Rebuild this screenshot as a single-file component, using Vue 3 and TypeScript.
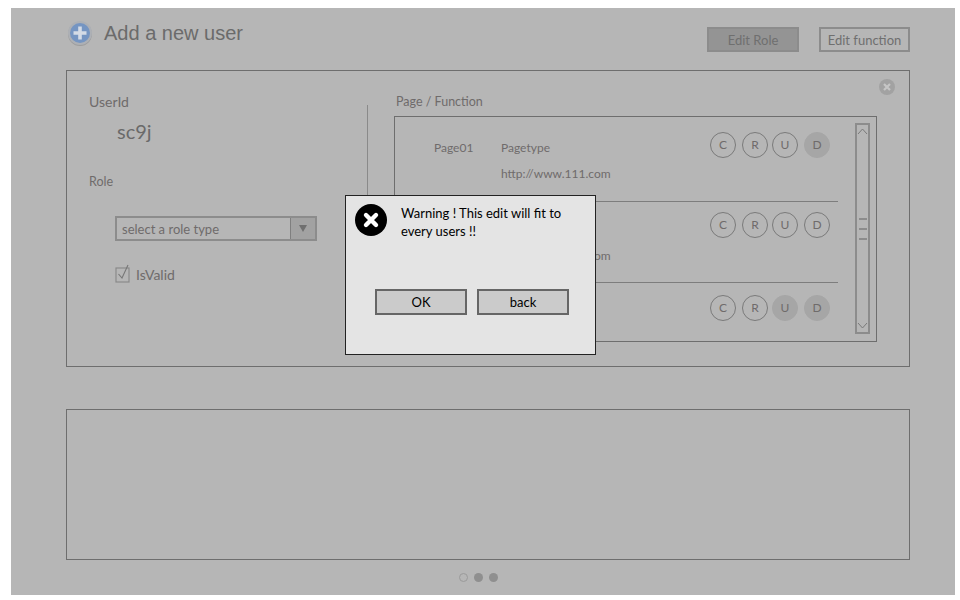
<script setup lang="ts">
type Row = {
  page: string;
  type: string;
  url: string;
  filled: string[];
};

// the modal covers the rest of rows 2 and 3
const rows: Row[] = [
  { page: "Page01", type: "Pagetype", url: "http://www.111.com", filled: ["D"] },
  { page: "", type: "", url: "http://www.111.com", filled: [] },
  { page: "", type: "", url: "", filled: ["U", "D"] },
];

const actions = ["C", "R", "U", "D"];
</script>

<template>
  <div class="frame">
    <header class="top">
      <svg class="add-icon" width="26" height="26" viewBox="0 0 26 26">
        <circle cx="13" cy="14" r="12" fill="#9c9c9c" />
        <circle cx="13" cy="13" r="12" fill="#adb0b5" />
        <circle cx="13" cy="13" r="10" fill="#7595c2" />
        <path d="M13 6.5v13M6.5 13h13" stroke="#d4dbe6" stroke-width="3.6" />
      </svg>
      <h1 class="title">Add a new user</h1>
      <div class="top-actions">
        <button class="tab tab-active">Edit Role</button>
        <button class="tab">Edit function</button>
      </div>
    </header>

    <section class="panel">
      <div class="left">
        <div class="label user-label">UserId</div>
        <div class="user-id">sc9j</div>
        <div class="label role-label">Role</div>
        <div class="select">
          <span class="select-text">select a role type</span>
          <span class="select-arrow"></span>
        </div>
        <label class="valid">
          <svg width="17" height="19" viewBox="0 0 17 19">
            <rect x="1" y="4" width="13" height="14" fill="none" stroke="#8a8a8a" stroke-width="1.2" />
            <path d="M3.5 10l3.5 4 6-13" fill="none" stroke="#777" stroke-width="1.1" />
          </svg>
          <span>IsValid</span>
        </label>
      </div>

      <div class="divider"></div>

      <div class="right">
        <div class="label func-label">Page / Function</div>
        <div class="list">
          <div class="rows">
            <div v-for="(row, i) in rows" :key="i" class="row">
              <div class="page">{{ row.page }}</div>
              <div class="info">
                <div class="type">{{ row.type }}</div>
                <div class="url">{{ row.url }}</div>
              </div>
              <div class="crud">
                <span
                  v-for="a in actions"
                  :key="a"
                  class="circle"
                  :class="{ filled: row.filled.includes(a) }"
                >{{ a }}</span>
              </div>
            </div>
          </div>
          <div class="scrollbar">
            <svg width="11" height="12" viewBox="0 0 11 12">
              <path d="M1 9l4.5-5L10 9" fill="none" stroke="#7a7a7a" />
            </svg>
            <div class="grip"><i></i><i></i><i></i></div>
            <svg width="11" height="12" viewBox="0 0 11 12">
              <path d="M1 3l4.5 5L10 3" fill="none" stroke="#7a7a7a" />
            </svg>
          </div>
        </div>
      </div>

      <svg class="panel-close" width="16" height="16" viewBox="0 0 16 16">
        <circle cx="8" cy="8" r="8" fill="#a2a2a2" />
        <path d="M5 5l6 6M11 5l-6 6" stroke="#c6c6c6" stroke-width="2.2" />
      </svg>
    </section>

    <section class="panel-empty"></section>

    <div class="dots">
      <span class="dot dot-open"></span>
      <span class="dot"></span>
      <span class="dot"></span>
    </div>

    <div class="modal">
      <div class="modal-body">
        <svg class="modal-icon" width="32" height="32" viewBox="0 0 32 32">
          <circle cx="16" cy="16" r="16" fill="#000" />
          <path d="M11 11l10 10M21 11L11 21" stroke="#fff" stroke-width="4.4" stroke-linecap="round" />
        </svg>
        <p class="modal-text">Warning ! This edit will fit to every users !!</p>
      </div>
      <div class="modal-actions">
        <button class="modal-btn">OK</button>
        <button class="modal-btn">back</button>
      </div>
    </div>
  </div>
</template>

<style scoped>
.frame {
  position: relative;
  box-sizing: border-box;
  width: 944px;
  height: 587px;
  margin: 8px 0 0 11px;
  background: #b6b6b6;
  color: #6f6b6b;
  font: 13px/16px Lato, sans-serif;
}

.top {
  display: flex;
  align-items: flex-start;
  height: 62px;
  padding: 12px 45px 0 56px;
  box-sizing: border-box;
}

.add-icon {
  flex: none;
}

.title {
  margin: 0 0 0 11px;
  font: 400 20px/26px "Liberation Sans", sans-serif;
  color: #6b6b6b;
}

.top-actions {
  display: flex;
  gap: 20px;
  margin: 7px 0 0 auto;
}

.tab {
  box-sizing: border-box;
  width: 91px;
  height: 25px;
  padding: 0;
  border: 2px solid #8c8c8c;
  background: transparent;
  color: #6f6f6f;
  font: 13px Lato, sans-serif;
}

.tab-active {
  width: 92px;
  background: #949494;
}

.panel {
  position: relative;
  display: flex;
  align-items: flex-start;
  box-sizing: border-box;
  width: 844px;
  height: 297px;
  margin-left: 55px;
  border: 1px solid #6e6e6e;
}

.left {
  box-sizing: border-box;
  width: 300px;
  padding: 23px 0 0 22px;
}

.user-label {
  font-size: 14px;
}

.user-id {
  margin: 10px 0 0 28px;
  font-size: 20px;
  line-height: 22px;
  color: #6a6a6a;
}

.role-label {
  margin-top: 32px;
  font-size: 12.5px;
}

.select {
  display: flex;
  box-sizing: border-box;
  width: 202px;
  height: 25px;
  margin: 26px 0 0 26px;
  border: 2px solid #8c8c8c;
}

.select-text {
  flex: 1;
  padding-left: 5px;
  line-height: 23px;
}

.select-arrow {
  position: relative;
  width: 24px;
  border-left: 1px solid #7f7f7f;
  background: #a2a2a2;
}

.select-arrow::after {
  content: "";
  position: absolute;
  left: 8px;
  top: 7px;
  border-style: solid;
  border-width: 7px 4px 0;
  border-color: #6f6f6f transparent transparent;
}

.valid {
  display: flex;
  align-items: flex-end;
  gap: 4px;
  height: 19px;
  margin: 23px 0 0 26px;
  font-size: 14px;
}

.divider {
  width: 1px;
  height: 250px;
  margin-top: 34px;
  background: #8a8a8a;
}

.right {
  margin-left: 26px;
  padding-top: 23px;
}

.func-label {
  margin-left: 2px;
  font-size: 12.5px;
}

.list {
  display: flex;
  box-sizing: border-box;
  width: 483px;
  height: 226px;
  margin-top: 6px;
  border: 1px solid #6e6e6e;
}

.rows {
  width: 443px;
}

.row {
  display: flex;
  box-sizing: border-box;
  padding-left: 39px;
  border-bottom: 1px solid #7d7d7d;
}

.row:nth-child(1) {
  height: 85px;
  padding-top: 23px;
}

.row:nth-child(2) {
  height: 81px;
  padding-top: 20px;
}

.row:nth-child(3) {
  height: 58px;
  padding-top: 20px;
  border-bottom: 0;
}

.page {
  width: 67px;
  font-size: 12px;
}

.type {
  min-height: 16px;
  font-size: 12px;
}

.url {
  margin-top: 10px;
  font-size: 12px;
}

.crud {
  display: flex;
  margin-left: auto;
  margin-right: 8px;
}

.row:nth-child(1) .crud {
  margin-top: -8px;
}

.row:nth-child(2) .crud {
  margin-top: -10px;
}

.row:nth-child(3) .crud {
  margin-top: -8px;
}

.circle {
  display: flex;
  align-items: center;
  justify-content: center;
  box-sizing: border-box;
  width: 26px;
  height: 26px;
  border: 1px solid #7a7a7a;
  border-radius: 50%;
  font-size: 12px;
}

.circle:nth-child(2),
.circle:nth-child(4) {
  margin-left: 6px;
}

.circle:nth-child(3) {
  margin-left: 4px;
}

.circle.filled {
  border-color: #a6a6a6;
  background: #a6a6a6;
}

.scrollbar {
  display: flex;
  flex-direction: column;
  align-items: center;
  justify-content: space-between;
  box-sizing: border-box;
  width: 15px;
  height: 211px;
  margin: 6px 0 0 17px;
  border: 2px solid #8c8c8c;
}

.grip {
  display: flex;
  flex-direction: column;
  gap: 8px;
}

.grip i {
  display: block;
  width: 8px;
  height: 2px;
  background: #8c8c8c;
}

.panel-close {
  position: absolute;
  top: 8px;
  right: 14px;
}

.panel-empty {
  box-sizing: border-box;
  width: 844px;
  height: 151px;
  margin: 42px 0 0 55px;
  border: 1px solid #6e6e6e;
}

.dots {
  display: flex;
  justify-content: center;
  gap: 6px;
  width: 70px;
  margin: 13px 0 0 432px;
}

.dot {
  box-sizing: border-box;
  width: 9px;
  height: 9px;
  border-radius: 50%;
  background: #8f8f8f;
}

.dot-open {
  border: 1.5px solid #9a9a9a;
  background: transparent;
}

.modal {
  position: absolute;
  left: 334px;
  top: 187px;
  box-sizing: border-box;
  width: 251px;
  height: 160px;
  padding: 8px 26px 0 9px;
  background: #e4e4e4;
  border: 1px solid #222;
  color: #000;
}

.modal-body {
  display: flex;
  gap: 14px;
}

.modal-icon {
  flex: none;
}

.modal-text {
  margin: 0;
  line-height: 18px;
}

.modal-actions {
  display: flex;
  gap: 10px;
  margin: 49px 0 0 20px;
}

.modal-btn {
  box-sizing: border-box;
  width: 92px;
  height: 26px;
  padding: 0;
  border: 2px solid #666;
  background: #cbcbcb;
  color: #000;
  font: 13px Lato, sans-serif;
}
</style>
